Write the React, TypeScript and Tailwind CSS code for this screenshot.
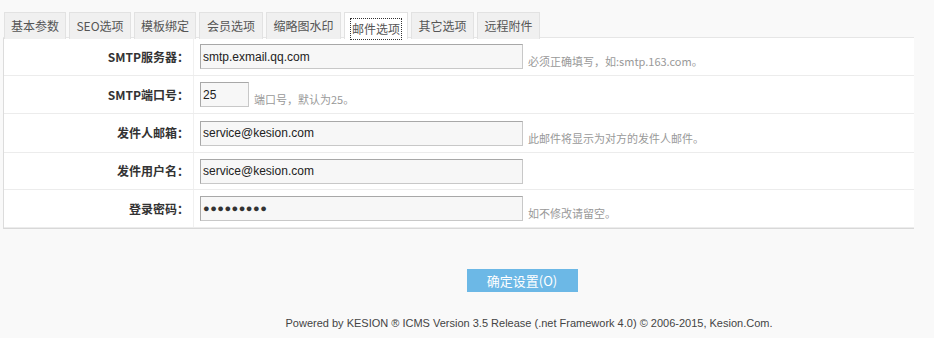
import React from "react";

const tabs: [string, string][] = [
  ["基本参数", "w-[62px]"],
  ["SEO选项", "w-[62px]"],
  ["模板绑定", "w-[62px]"],
  ["会员选项", "w-[64px]"],
  ["缩略图水印", "w-[75px]"],
  ["邮件选项", "w-[64px]"],
  ["其它选项", "w-[63px]"],
  ["远程附件", "w-[63px]"],
];

const cjk = { fontFamily: '"Noto Sans CJK SC", "Liberation Sans", sans-serif' };
const arial = { fontFamily: '"Liberation Sans", Arial, "Noto Sans CJK SC", sans-serif' };

function Row({
  label,
  value,
  short,
  password,
  hint,
  h,
}: {
  label: string;
  value: string;
  short?: boolean;
  password?: boolean;
  hint?: string;
  h: string;
}) {
  return (
    <div className={`flex border-b border-[#ececec] ${h}`}>
      <div
        className="w-[190px] shrink-0 border-r border-[#f0f0f0] flex items-center justify-end pr-[4px] text-[12px] font-bold text-[#333]"
        style={cjk}
      >
        {label}
      </div>
      <div className="flex items-center pl-[6px]">
        <div
          className={`${short ? "w-[49px]" : "w-[323px]"} h-[25px] bg-[#f7f7f7] border border-[#c8c8c8] border-t-[#a8a8a8] border-l-[#a8a8a8] flex items-center pl-[2px] text-[12px] text-[#222]`}
          style={arial}
        >
          {password ? (
            <span className="tracking-[0.5px] text-[#333] text-[11px]">●●●●●●●●●</span>
          ) : (
            value
          )}
        </div>
        {hint && (
          <div className="self-end mb-[6px] ml-[5px] text-[11px] text-[#999]" style={cjk}>
            {hint}
          </div>
        )}
      </div>
    </div>
  );
}

export default function App() {
  return (
    <div className="w-[934px] h-[338px] bg-[#f9f9f9] overflow-hidden" style={cjk}>
      <div className="h-[12px]" />
      <div className="ml-[3px] w-[911px]">
        <div className="flex h-[26px] gap-[3px] pl-[1px] border-b border-[#e6e6e6]">
          {tabs.map(([t, w]) => {
            const active = t === "邮件选项";
            return (
              <div
                key={t}
                className={`${w} h-[27px] flex items-center justify-center text-[12px] text-[#555] border border-[#e2e2e2] border-b-0 ${
                  active ? "bg-white" : "bg-[#f0f0f0]"
                }`}
              >
                {active ? (
                  <span className="border border-dotted border-[#333] leading-[20px] px-[1px] mt-[6px]">{t}</span>
                ) : (
                  t
                )}
              </div>
            );
          })}
        </div>
        <div className="bg-white border-l border-[#dcdcdc] border-b border-b-[#d8d8d8]">
          <Row label="SMTP服务器：" value="smtp.exmail.qq.com" hint="必须正确填写，如:smtp.163.com。" h="h-[38px]" />
          <Row label="SMTP端口号：" value="25" short hint="端口号，默认为25。" h="h-[38px]" />
          <Row label="发件人邮箱：" value="service@kesion.com" hint="此邮件将显示为对方的发件人邮件。" h="h-[39px]" />
          <Row label="发件用户名：" value="service@kesion.com" h="h-[37px]" />
          <Row label="登录密码：" value="" password hint="如不修改请留空。" h="h-[38px]" />
        </div>
      </div>
      <div className="flex justify-center pl-[110px] mt-[40px]">
        <div className="w-[111px] h-[23px] bg-[#6cb8e6] text-white text-[13px] flex items-center justify-center" style={cjk}>
          确定设置(O)
        </div>
      </div>
      <div className="flex justify-center pl-[124px] mt-[23px] text-[11px] text-[#444]" style={arial}>
        Powered by KESION ® ICMS Version 3.5 Release (.net Framework 4.0) © 2006-2015, Kesion.Com.
      </div>
    </div>
  );
}
